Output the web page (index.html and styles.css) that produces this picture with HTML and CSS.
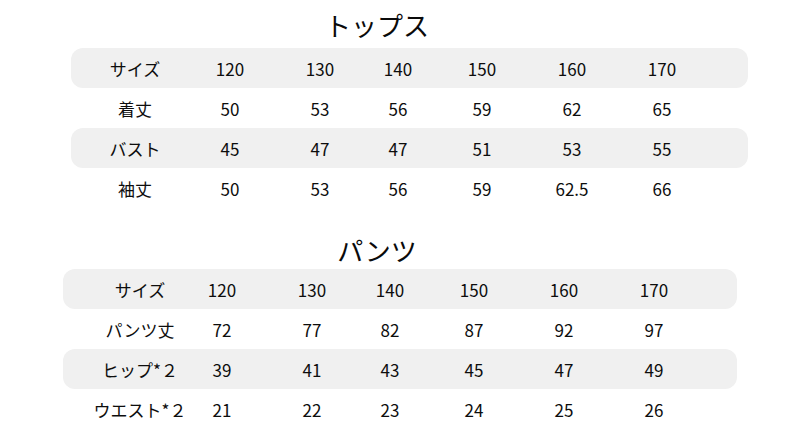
FILE: index.html
```html
<!DOCTYPE html>
<html lang="ja">
<head>
<meta charset="utf-8">
<link rel="stylesheet" href="styles.css">
</head>
<body>
<main class="sheet">
  <section class="block tops">
    <h2 class="title">トップス</h2>
    <div class="table">
      <div class="row band"><div class="cell label">サイズ</div><div class="cell">120</div><div class="cell">130</div><div class="cell">140</div><div class="cell">150</div><div class="cell">160</div><div class="cell">170</div></div>
      <div class="row"><div class="cell label">着丈</div><div class="cell">50</div><div class="cell">53</div><div class="cell">56</div><div class="cell">59</div><div class="cell">62</div><div class="cell">65</div></div>
      <div class="row band"><div class="cell label">バスト</div><div class="cell">45</div><div class="cell">47</div><div class="cell">47</div><div class="cell">51</div><div class="cell">53</div><div class="cell">55</div></div>
      <div class="row"><div class="cell label">袖丈</div><div class="cell">50</div><div class="cell">53</div><div class="cell">56</div><div class="cell">59</div><div class="cell">62.5</div><div class="cell">66</div></div>
    </div>
  </section>
  <section class="block pants">
    <h2 class="title">パンツ</h2>
    <div class="table">
      <div class="row band"><div class="cell label">サイズ</div><div class="cell">120</div><div class="cell">130</div><div class="cell">140</div><div class="cell">150</div><div class="cell">160</div><div class="cell">170</div></div>
      <div class="row"><div class="cell label">パンツ丈</div><div class="cell">72</div><div class="cell">77</div><div class="cell">82</div><div class="cell">87</div><div class="cell">92</div><div class="cell">97</div></div>
      <div class="row band"><div class="cell label">ヒップ*２</div><div class="cell">39</div><div class="cell">41</div><div class="cell">43</div><div class="cell">45</div><div class="cell">47</div><div class="cell">49</div></div>
      <div class="row"><div class="cell label">ウエスト*２</div><div class="cell">21</div><div class="cell">22</div><div class="cell">23</div><div class="cell">24</div><div class="cell">25</div><div class="cell">26</div></div>
    </div>
  </section>
</main>
</body>
</html>
```
FILE: styles.css
```css
html, body {
  margin: 0;
  padding: 0;
  background: #ffffff;
}
body {
  font-family: "Noto Sans CJK JP", "Noto Sans", sans-serif;
  color: #0d0d0d;
}
.sheet {
  width: 790px;
  padding-top: 7px;
}
.title {
  margin: 0;
  width: 754px;
  font-size: 26px;
  font-weight: 400;
  line-height: 36px;
  text-align: center;
  color: #0a0a0a;
}
.tops .title {
  margin-bottom: 5px;
}
.pants {
  margin-top: 24px;
}
.pants .title {
  margin-bottom: 1px;
}
.table {
  width: 677px;
  margin-left: 71px;
}
.pants .table {
  width: 674px;
  margin-left: 63px;
}
.row {
  display: grid;
  grid-template-columns: 128px 62px 118px 38px 130px 50px 130px;
  height: 40px;
  font-size: 17px;
  line-height: 41px;
}
.band {
  background: #f0f0f0;
  border-radius: 12px;
}
.cell {
  display: flex;
  justify-content: center;
  white-space: nowrap;
}
.pants .label {
  padding-left: 26px;
}
```
